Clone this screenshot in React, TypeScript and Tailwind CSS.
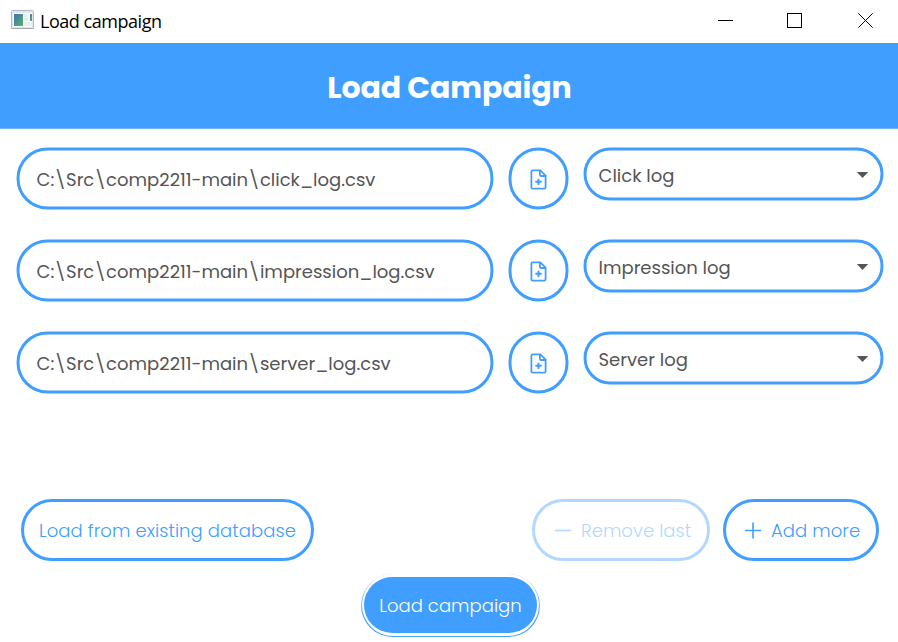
import React from "react";

const geo = "font-[Poppins,Inter,sans-serif] whitespace-nowrap";

const rows = [
  { path: "C:\\Src\\comp2211-main\\click_log.csv", type: "Click log" },
  { path: "C:\\Src\\comp2211-main\\impression_log.csv", type: "Impression log" },
  { path: "C:\\Src\\comp2211-main\\server_log.csv", type: "Server log" },
];

function WindowIcon() {
  return (
    <svg className="ml-[11px] shrink-0" width="23" height="20" viewBox="0 0 23 20">
      <defs>
        <linearGradient id="pane" x1="0" y1="0" x2="1" y2="1">
          <stop offset="0" stopColor="#3c74b4" />
          <stop offset="1" stopColor="#58b36b" />
        </linearGradient>
      </defs>
      <rect x="0.5" y="0.5" width="22" height="18" rx="1" fill="#e3e7eb" stroke="#b4bac0" />
      <path d="M0.5 18.5H22.5" stroke="#a2a9b0" />
      <rect x="2" y="3" width="19" height="14" fill="#fff" />
      <rect x="3" y="4" width="9" height="12" fill="url(#pane)" />
      <rect x="13" y="4" width="4" height="7" fill="#e9eded" />
      <rect x="13" y="12" width="8" height="4" fill="#edf0f0" />
      <rect x="19" y="4" width="2" height="7" fill="url(#pane)" />
    </svg>
  );
}

function FileIcon() {
  return (
    <svg className="mt-px" width="18" height="22" viewBox="0 0 18 22" fill="none" stroke="#409eff" strokeWidth="1.8" strokeLinejoin="round" strokeLinecap="round">
      <path d="M10.8 1.9H3.3Q1.9 1.9 1.9 3.3V18.7Q1.9 20.1 3.3 20.1H14.7Q16.1 20.1 16.1 18.7V7.2Z" />
      <path d="M10.4 2.2V6.2Q10.4 7.5 11.7 7.5H15.8" />
      <path d="M9 10.9V15.7M6.6 13.3H11.4" strokeWidth="2" />
    </svg>
  );
}

export default function App() {
  return (
    <div className="flex h-[642px] w-[898px] flex-col overflow-hidden bg-white">
      <div className="flex h-[43px] shrink-0 items-start">
        <div className="flex h-5 grow items-center pt-[20px]">
          <WindowIcon />
          <span className="ml-[6px] mt-px font-['Open_Sans',sans-serif] text-[18px] leading-6 tracking-[-0.46px] whitespace-nowrap text-black">Load campaign</span>
        </div>
        <svg width="198" height="43" viewBox="0 0 198 43" fill="none" stroke="#000">
          <path d="M18 20.5H33" />
          <rect x="87.5" y="13.5" width="14" height="14" />
          <path d="M158.3 13.3L172.7 27.7M172.7 13.3L158.3 27.7" />
        </svg>
      </div>
      <header className="flex h-[86px] shrink-0 items-center justify-center border-b border-[#6fb6ff] bg-[#409eff]">
        <h1 className={`${geo} pt-[4px] pl-px text-[30px] font-bold tracking-[-0.1px] text-white`}>Load Campaign</h1>
      </header>
      <main className="flex translate-x-[-0.5px] translate-y-[-0.5px] flex-col gap-[30px] pt-[19px] pl-[17px]">
        {rows.map((r) => (
          <div key={r.type} className="flex h-[62px] items-start gap-[15px]">
            <div className="flex h-[62px] w-[477px] items-center rounded-full border-3 border-[#409eff] pt-px pl-[17px]">
              <span className={`${geo} text-[18px] text-[#555]`}>{r.path}</span>
            </div>
            <button className="flex h-[62px] w-[60px] items-center justify-center rounded-full border-3 border-[#409eff]">
              <FileIcon />
            </button>
            <div className="flex h-[53px] w-[300px] items-center justify-between rounded-full border-3 border-[#409eff] pr-[12px] pl-[12px]">
              <span className={`${geo} pt-px text-[18px] text-[#555]`}>{r.type}</span>
              <svg className="mt-px" width="12" height="7" viewBox="0 0 12 7"><path d="M0.3 0.4H11.7L6 6.4Z" fill="#555" /></svg>
            </div>
          </div>
        ))}
      </main>
      <div className="mt-[105px] flex h-[62px] shrink-0 pl-[21px]">
        <button className={`${geo} flex w-[293px] items-center justify-center rounded-full border-3 border-[#409eff] pt-px text-[18px] font-light tracking-[0.07px] text-[#409eff]`}>
          Load from existing database
        </button>
        <button className={`${geo} ml-[218px] flex w-[178px] items-center rounded-full border-3 border-[#b3d8ff] pt-px pl-[19px] text-[18px] font-light tracking-[0.07px] text-[#b3d8ff]`}>
          <svg className="mr-[9px]" width="18" height="18" viewBox="0 0 18 18" stroke="currentColor" strokeWidth="1.6"><path d="M1 8.5H17" /></svg>
          Remove last
        </button>
        <button className={`${geo} ml-[13px] flex w-[156px] items-center rounded-full border-3 border-[#409eff] pt-px pl-[18px] text-[18px] font-light tracking-[0.07px] text-[#409eff]`}>
          <svg className="mr-[9px]" width="18" height="18" viewBox="0 0 18 18" stroke="currentColor" strokeWidth="1.6"><path d="M1 8.5H17M9 0.5V16.5" /></svg>
          Add more
        </button>
      </div>
      <div className="mt-[13px] flex shrink-0 pl-[361px]">
        <div className="h-[63px] w-[179px] rounded-full bg-linear-to-b from-[#b3d8ff] to-[#409eff] to-80% px-px pb-[1px]">
          <button className="flex h-[62px] w-full rounded-full bg-white px-[2px] pt-[3px] pb-[3px]">
            <span className={`${geo} flex h-full w-full items-center justify-center rounded-full bg-[#409eff] pt-px text-[18px] font-light tracking-[0.03px] text-white`}>Load campaign</span>
          </button>
        </div>
      </div>
    </div>
  );
}
